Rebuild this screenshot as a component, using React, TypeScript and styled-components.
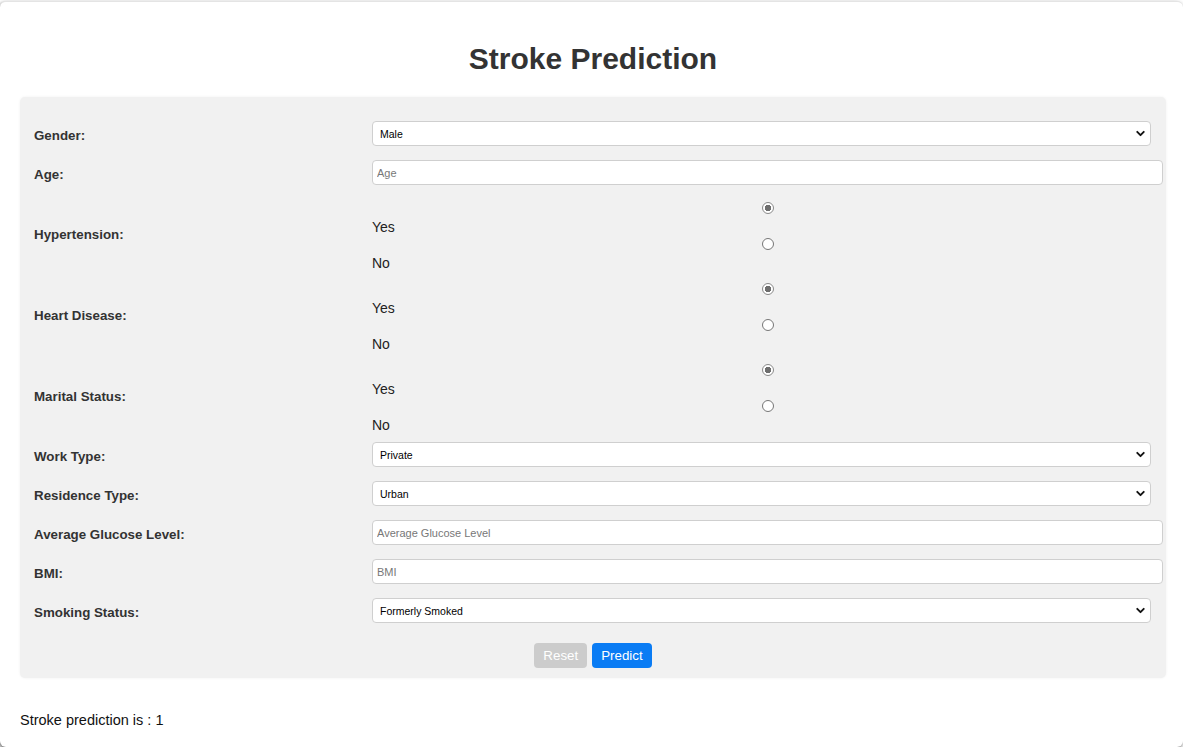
import styled, { createGlobalStyle } from "styled-components";
import { ChevronDown } from "lucide-react";

const GlobalStyle = createGlobalStyle`
    html, body {
        margin: 0;
        padding: 0;
        background: #fff;
        font-family: "Liberation Sans", Arial, sans-serif;
    }
`;

const Card = styled.div`
    box-sizing: border-box;
    height: 746px;
    margin-top: 1px;
    padding: 20px 17px 20px 20px;
    border-top: 1px solid #e4e4e4;
    border-radius: 6px;
    box-shadow: -1px 2px 4px rgba(0, 0, 0, 0.6);
    background: #fff;
`;

const Title = styled.h1`
    margin: 20px 0 21px;
    text-align: center;
    font-size: 30px;
    line-height: 34px;
    font-weight: bold;
    color: #333;
`;

// 입력 폼 패널
const Panel = styled.form`
    margin: 0;
    padding: 17px 3px 10px 14px;
    background: #f1f1f1;
    border-radius: 5px;
    box-shadow: 0 0 3px rgba(0, 0, 0, 0.06);
`;

const Row = styled.div`
    display: grid;
    grid-template-columns: 338px 1fr;
    align-items: center;
    padding: 7px 0;
`;

const Label = styled.label`
    padding-top: 4px;
    font-size: 13.33px;
    font-weight: bold;
    color: #333;
`;

const SelectWrap = styled.div`
    position: relative;
    width: calc(100% - 12px);
    height: 25px;

    svg {
        position: absolute;
        right: 4px;
        top: 6px;
        pointer-events: none;
        color: #111;
    }
`;

const Select = styled.select`
    box-sizing: border-box;
    width: 100%;
    height: 25px;
    appearance: none;
    padding: 0 24px 0 7px;
    border: 1px solid #cfcfcf;
    border-radius: 4px;
    background: #fff;
    font-family: "Liberation Sans", Arial, sans-serif;
    font-size: 10.5px;
    color: #000;
`;

const Input = styled.input`
    box-sizing: border-box;
    width: 100%;
    height: 25px;
    padding: 0 4px;
    border: 1px solid #cfcfcf;
    border-radius: 4px;
    background: #fff;
    font-family: "Liberation Sans", Arial, sans-serif;
    font-size: 11px;

    &::placeholder {
        color: #777;
    }
`;

// 예/아니오 라디오 묶음
const RadioGroup = styled.div`
    display: flex;
    flex-direction: column;
    height: 67px;

    & > * {
        flex-shrink: 0;
    }
`;

const Radio = styled.input<{ $top: number }>`
    appearance: none;
    box-sizing: border-box;
    align-self: center;
    width: 12px;
    height: 12px;
    margin: ${(p) => p.$top}px 0 0;
    border: 1px solid #767676;
    border-radius: 50%;
    background: #fff;

    &:checked {
        border-color: #8a8a8a;
        background: radial-gradient(circle, #6e6e6e 0 3px, #fff 3.5px);
    }
`;

const RadioText = styled.span<{ $top: number }>`
    margin-top: ${(p) => p.$top}px;
    font-size: 14px;
    line-height: 14px;
    color: #222;
`;

const Buttons = styled.div`
    display: flex;
    justify-content: center;
    gap: 5px;
    padding-top: 12.5px;
    padding-right: 11px;
`;

const Button = styled.button<{ $primary?: boolean }>`
    height: 25px;
    padding: 0 9px;
    border: none;
    border-radius: 4px;
    background: ${(p) => (p.$primary ? "#0a7cf4" : "#cccccc")};
    color: #fff;
    font-family: "Liberation Sans", Arial, sans-serif;
    font-size: 13.33px;
`;

const Result = styled.p`
    margin: 34px 0 0;
    font-size: 14.5px;
    line-height: 16px;
    color: #111;
`;

const SelectRow = ({ label, value }: { label: string; value: string }) => (
    <Row>
        <Label>{label}</Label>
        <SelectWrap>
            <Select defaultValue={value}>
                <option>{value}</option>
            </Select>
            <ChevronDown size={13} strokeWidth={3.5} />
        </SelectWrap>
    </Row>
);

const InputRow = ({ label, placeholder }: { label: string; placeholder: string }) => (
    <Row>
        <Label>{label}</Label>
        <Input placeholder={placeholder} />
    </Row>
);

const RadioRow = ({ label, name }: { label: string; name: string }) => (
    <Row>
        <Label>{label}</Label>
        <RadioGroup>
            <Radio type="radio" name={name} defaultChecked $top={3} />
            <RadioText $top={6}>Yes</RadioText>
            <Radio type="radio" name={name} $top={4} />
            <RadioText $top={6}>No</RadioText>
        </RadioGroup>
    </Row>
);

const App = () => {
    return (
        <>
            <GlobalStyle />
            <Card>
                <Title>Stroke Prediction</Title>
                <Panel>
                    <SelectRow label="Gender:" value="Male" />
                    <InputRow label="Age:" placeholder="Age" />
                    <RadioRow label="Hypertension:" name="hypertension" />
                    <RadioRow label="Heart Disease:" name="heart" />
                    <RadioRow label="Marital Status:" name="marital" />
                    <SelectRow label="Work Type:" value="Private" />
                    <SelectRow label="Residence Type:" value="Urban" />
                    <InputRow label="Average Glucose Level:" placeholder="Average Glucose Level" />
                    <InputRow label="BMI:" placeholder="BMI" />
                    <SelectRow label="Smoking Status:" value="Formerly Smoked" />
                    <Buttons>
                        <Button type="button">Reset</Button>
                        <Button type="button" $primary>
                            Predict
                        </Button>
                    </Buttons>
                </Panel>
                <Result>Stroke prediction is : 1</Result>
            </Card>
        </>
    );
};

export default App;
